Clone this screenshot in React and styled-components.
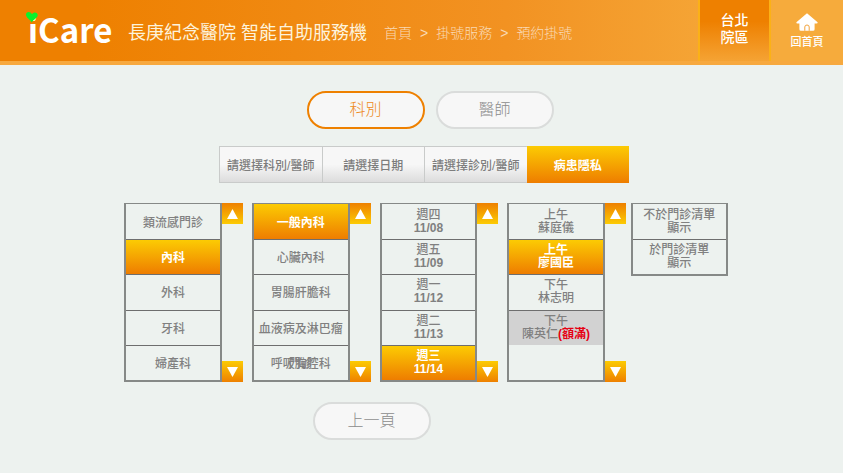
import React, { useState } from "react";
import styled, { createGlobalStyle, css } from "styled-components";

const GlobalStyle = createGlobalStyle`
  * { box-sizing: border-box; }
  body {
    margin: 0;
    background: #edf2ef;
    color: #808080;
    font-family: "Liberation Sans", "Noto Sans CJK TC", sans-serif;
  }
  button { font-family: inherit; padding: 0; cursor: pointer; }
`;

const activeFill = css`
  background: linear-gradient(#fccb03, #ee7d00);
  color: #fff;
`;

const Header = styled.header`
  display: flex;
  height: 65px;
  background: linear-gradient(90deg, #ee8000 10%, #f29222 60%, #f6ab3c 92%);
  border-bottom: 4px solid #f7a93f;
`;

const Logo = styled.h1`
  position: relative;
  width: 84px;
  margin: 0 16px 0 28px;
  color: #fff;
  font: bold 33px/59px "Noto Sans CJK TC", sans-serif;
`;

const Heart = styled.svg`
  position: absolute;
  left: -3px;
  top: 11px;
  width: 14px;
  height: 12px;
`;

const Title = styled.h2`
  width: 256px;
  margin: 0;
  color: #fdf3dc;
  font-size: 18px;
  font-weight: 400;
  line-height: 67px;
  white-space: pre;
`;

const Crumbs = styled.nav`
  display: flex;
  gap: 8px;
  flex: 1;
  color: #f9d9b4;
  font-size: 14px;
  font-weight: 300;
  line-height: 67px;
  white-space: nowrap;
`;

const Crumb = styled.a`
  color: inherit;
  text-decoration: none;
`;

const Region = styled.div`
  width: 73px;
  padding-top: 12px;
  border: solid #fbb117;
  border-width: 0 2px;
  background: linear-gradient(#ee8000 35%, #f5a334);
  color: #fff;
  font-size: 14px;
  font-weight: 500;
  line-height: 17px;
  text-align: center;
`;

const Home = styled.a`
  display: flex;
  flex-direction: column;
  align-items: center;
  width: 72px;
  padding-top: 13px;
  color: #fff;
  font-size: 11px;
  font-weight: 500;
  line-height: 16px;
  text-decoration: none;
  svg { width: 22px; height: 18px; margin-bottom: 3px; }
`;

const Pills = styled.div`
  display: flex;
  justify-content: center;
  gap: 11px;
  padding: 26px 0 17px 17px;
`;

const Pill = styled.button`
  width: 118px;
  height: 38px;
  border: 2px solid ${(p) => (p.$active ? "#ee8000" : "#dadcdb")};
  border-radius: 19px;
  background: #f7f7f7;
  color: ${(p) => (p.$active ? "#ee8a22" : "#8c8c8c")};
  font-size: 16px;
  font-weight: 300;
  line-height: 34px;
`;

const Steps = styled.div`
  display: grid;
  grid-template-columns: repeat(4, 1fr);
  margin: 0 214px 0 219px;
`;

const Step = styled.button`
  height: 37px;
  border: solid #c9cbca;
  border-width: 1px 0 1px 1px;
  background: linear-gradient(#f7f7f7 50%, #dcdcdc);
  color: #7d7d7d;
  font-size: 12px;
  font-weight: 500;
  white-space: nowrap;
  ${(p) => p.$active && activeFill}
  ${(p) => p.$active && css`border: 0; font-weight: 700;`}
`;

const Board = styled.main`
  display: grid;
  grid-template-columns: 255fr 255fr 255fr 246fr 194fr;
  align-items: start;
  margin: 20px 115px 0 124px;
`;

const Group = styled.section`
  display: flex;
  padding-right: ${(p) => p.$gap}px;
`;

const List = styled.div`
  display: grid;
  grid-template-rows: repeat(${(p) => p.$rows}, 1fr);
  flex: 1;
  height: ${(p) => (p.$rows === 5 ? 179 : 73)}px;
  border: 2px solid #868987;
  border-top-width: 1px;
`;

const Cell = styled.button`
  position: relative;
  display: flex;
  flex-direction: column;
  align-items: center;
  justify-content: center;
  min-width: 0;
  padding-top: ${(p) => (p.$single ? 3 : 0)}px;
  border: 0;
  background: ${(p) => (p.$full ? "#d2d2d2" : "transparent")};
  color: #808080;
  font-size: 12px;
  font-weight: 500;
  line-height: 13px;
  white-space: nowrap;
  & + & { border-top: 1px solid #6e6e6e; }
  ${(p) => p.$active && activeFill}
  ${(p) => p.$active && css`font-weight: 700;`}
`;

const DateText = styled.span`
  font-weight: 700;
`;

const Full = styled.b`
  color: #e60012;
`;

const Overprint = styled.span`
  position: absolute;
  inset: 0;
  display: flex;
  align-items: center;
  justify-content: center;
  padding-top: 3px;
`;

const Scroller = styled.div`
  display: flex;
  flex-direction: column;
  justify-content: space-between;
  width: 21px;
`;

const Arrow = styled.button`
  display: flex;
  align-items: center;
  justify-content: center;
  height: 21px;
  border: 0;
  background: linear-gradient(${(p) => (p.$up ? "#ee8000, #fccb03" : "#fccb03, #ee8000")});
  svg { width: 11px; height: 10px; fill: #fff; }
`;

const Footer = styled.footer`
  display: flex;
  justify-content: center;
  padding: 20px 100px 0 0;
`;

const departments = [["類流感門診"], ["內科"], ["外科"], ["牙科"], ["婦產科"]];
const clinics = [["一般內科"], ["心臟內科"], ["胃腸肝膽科"], ["血液病及淋巴瘤"], ["呼吸胸腔科"]];
const dates = [["週四", "11/08"], ["週五", "11/09"], ["週一", "11/12"], ["週二", "11/13"], ["週三", "11/14"]];
const doctors = [["上午", "蘇庭儀"], ["上午", "廖國臣"], ["下午", "林志明"], ["下午", "陳英仁"]];
const privacy = [["不於門診清單", "顯示"], ["於門診清單", "顯示"]];

function Picker({ label, items, initial, rows = 5, gap = 9, full, overprint, scroll = true }) {
  const [selected, setSelected] = useState(initial);
  return (
    <Group $gap={gap} aria-label={label}>
      <List $rows={rows}>
        {items.map(([first, second], i) => (
          <Cell
            key={i}
            $single={!second}
            $active={i === selected}
            $full={i === full}
            aria-pressed={i === selected}
            onClick={() => i !== full && setSelected(i)}
          >
            <span>{first}</span>
            {second && (second.includes("/") ? <DateText>{second}</DateText> : (
              <span>{second}{i === full && <Full>(額滿)</Full>}</span>
            ))}
            {overprint && i === items.length - 1 && <Overprint>{overprint}</Overprint>}
          </Cell>
        ))}
      </List>
      {scroll && (
        <Scroller>
          <Arrow $up aria-label={`${label} ▲`}>
            <svg viewBox="0 0 11 10"><path d="M5.5 0 11 10H0Z" /></svg>
          </Arrow>
          <Arrow aria-label={`${label} ▼`}>
            <svg viewBox="0 0 11 10"><path d="M5.5 10 0 0H11Z" /></svg>
          </Arrow>
        </Scroller>
      )}
    </Group>
  );
}

export default function App() {
  return (
    <>
      <GlobalStyle />
      <Header>
        <Logo>
          iCare
          <Heart viewBox="0 0 14 12" aria-hidden="true">
            <path d="M6.6 11.4C5 8.6 1 6.8 1 3.6 1 .4 5.4.2 7 3.2 8.4.6 12.8 1 12.7 4.2 12.4 7.2 8.4 8.4 6.6 11.4Z" fill="#09f32b" />
          </Heart>
        </Logo>
        <Title>長庚紀念醫院 智能自助服務機</Title>
        <Crumbs>
          <Crumb href="#home">首頁</Crumb>
          <span>&gt;</span>
          <Crumb href="#service">掛號服務</Crumb>
          <span>&gt;</span>
          <Crumb href="#booking">預約掛號</Crumb>
        </Crumbs>
        <Region>台北<br />院區</Region>
        <Home href="#home">
          <svg viewBox="0 0 22 18" aria-hidden="true">
            <path d="M11 .3 21.6 9.2Q22 10.4 20.5 10.4H18.6V16.2Q18.6 17.8 17 17.8H5Q3.4 17.8 3.4 16.2V10.4H1.5Q0 10.4.4 9.2Z" fill="#fff" />
            <path d="M8.8 17.8V14Q8.8 12 11 12T13.2 14V17.8" fill="none" stroke="#f2a33c" strokeWidth="1" />
          </svg>
          回首頁
        </Home>
      </Header>
      <Pills>
        <Pill $active>科別</Pill>
        <Pill>醫師</Pill>
      </Pills>
      <Steps>
        <Step>請選擇科別/醫師</Step>
        <Step>請選擇日期</Step>
        <Step>請選擇診別/醫師</Step>
        <Step $active>病患隱私</Step>
      </Steps>
      <Board>
        <Picker label="科別" items={departments} initial={1} />
        <Picker label="門診" items={clinics} initial={0} overprint="門診" />
        <Picker label="日期" items={dates} initial={4} />
        <Picker label="醫師" items={doctors} initial={1} full={3} gap={5} />
        <Picker label="病患隱私" items={privacy} initial={-1} rows={2} gap={0} scroll={false} />
      </Board>
      <Footer>
        <Pill>上一頁</Pill>
      </Footer>
    </>
  );
}
